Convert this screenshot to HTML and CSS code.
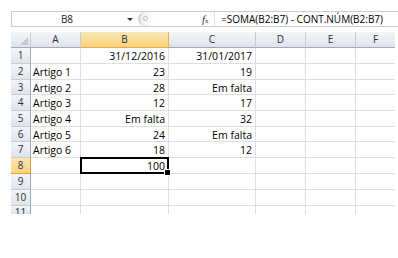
FILE: index.html
```html
<!DOCTYPE html>
<html lang="pt">
<head>
    <meta charset="UTF-8">
    <title>Folha</title>
    <link rel="stylesheet" href="styles.css">
</head>
<body>
<div class="excel">
    <!-- barra de formulas -->
    <div class="formula-bar">
        <div class="name-box">B8</div>
        <div class="name-drop"><span class="arrow"></span></div>
        <div class="splitter"><span class="knob"></span></div>
        <div class="fx"><i>f</i><sub>x</sub></div>
        <div class="formula">=SOMA(B2:B7) - CONT.NÚM(B2:B7)</div>
    </div>

    <!-- grelha -->
    <div class="sheet">
        <div class="hd corner"><span class="tri"></span></div>
        <div class="hd">A</div>
        <div class="hd sel">B</div>
        <div class="hd">C</div>
        <div class="hd">D</div>
        <div class="hd">E</div>
        <div class="hd last">F</div>

        <div class="rh">1</div><div class="c"></div><div class="c num">31/12/2016</div><div class="c num">31/01/2017</div><div class="c"></div><div class="c"></div><div class="c last"></div>
        <div class="rh">2</div><div class="c">Artigo 1</div><div class="c num">23</div><div class="c num">19</div><div class="c"></div><div class="c"></div><div class="c last"></div>
        <div class="rh">3</div><div class="c">Artigo 2</div><div class="c num">28</div><div class="c num">Em falta</div><div class="c"></div><div class="c"></div><div class="c last"></div>
        <div class="rh">4</div><div class="c">Artigo 3</div><div class="c num">12</div><div class="c num">17</div><div class="c"></div><div class="c"></div><div class="c last"></div>
        <div class="rh">5</div><div class="c">Artigo 4</div><div class="c num">Em falta</div><div class="c num">32</div><div class="c"></div><div class="c"></div><div class="c last"></div>
        <div class="rh">6</div><div class="c">Artigo 5</div><div class="c num">24</div><div class="c num">Em falta</div><div class="c"></div><div class="c"></div><div class="c last"></div>
        <div class="rh">7</div><div class="c">Artigo 6</div><div class="c num">18</div><div class="c num">12</div><div class="c"></div><div class="c"></div><div class="c last"></div>
        <div class="rh sel">8</div><div class="c"></div><div class="c num active">100</div><div class="c"></div><div class="c"></div><div class="c"></div><div class="c last"></div>
        <div class="rh">9</div><div class="c"></div><div class="c"></div><div class="c"></div><div class="c"></div><div class="c"></div><div class="c last"></div>
        <div class="rh">10</div><div class="c"></div><div class="c"></div><div class="c"></div><div class="c"></div><div class="c"></div><div class="c last"></div>
        <div class="rh cut">11</div><div class="c cut"></div><div class="c cut"></div><div class="c cut"></div><div class="c cut"></div><div class="c cut"></div><div class="c cut last"></div>
    </div>
</div>
</body>
</html>
```

FILE: styles.css
```css
*{
    margin: 0;
    padding: 0;
    box-sizing: border-box;
}
body{
    background: #fff;
    font-family: "Open Sans", "Liberation Sans", sans-serif;
    font-size: 10.5px;
    color: #000;
}
.excel{
    padding: 11px 0 0 11px;
    width: 395px;
}

/* barra de formulas */
.formula-bar{
    display: flex;
    height: 16px;
    border-top: 1px solid #c6ccd4;
    border-bottom: 1px solid #c6ccd4;
    margin-right: -3px;
}
.name-box{
    width: 111px;
    border-left: 1px solid #c6ccd4;
    text-align: center;
    line-height: 14px;
    font-size: 10px;
    color: #222;
}
.name-drop{
    width: 14px;
    position: relative;
}
.name-drop .arrow{
    position: absolute;
    left: 5px;
    top: 6px;
    border-left: 3px solid transparent;
    border-right: 3px solid transparent;
    border-top: 3px solid #333;
}
.splitter{
    width: 66px;
    position: relative;
}
.splitter::before{
    content: "";
    position: absolute;
    left: 2px;
    top: 0;
    width: 14px;
    height: 14px;
    border-radius: 7px 0 0 7px;
    border-left: 2px solid #cdd2d8;
    background: linear-gradient(to right, #eceef1, #fff);
}
.splitter .knob{
    position: absolute;
    left: 7px;
    top: 4px;
    width: 5px;
    height: 5px;
    border-radius: 50%;
    border: 1px solid #b3b9c1;
}
.fx{
    width: 12px;
    font-family: "Liberation Serif", serif;
    font-size: 11px;
    line-height: 14px;
    color: #333;
}
.fx sub{
    font-size: 7px;
    vertical-align: baseline;
}
.formula{
    flex: 1;
    border-left: 1px solid #dfe2e6;
    padding-left: 6px;
    line-height: 14px;
    font-size: 10px;
    white-space: nowrap;
}

/* grelha */
.sheet{
    display: grid;
    grid-template-columns: 20px 50px 88px 87px 50px 50px 39px;
    grid-template-rows: 16px 16px 16px 15px 16px 16px 15px 16px 16px 16px 16px 8px;
    margin-top: 5px;
}
.hd, .rh{
    background: linear-gradient(#f3f5f8, #dfe4ea);
    border-right: 1px solid #c5ccd5;
    border-bottom: 1px solid #9eaab8;
    color: #27313c;
    text-align: center;
    line-height: 15px;
    font-size: 10px;
}
.rh{
    border-bottom: 1px solid #c5ccd5;
    border-right: 1px solid #9eaab8;
}
.hd.sel, .rh.sel{
    background: linear-gradient(#fbe6b4, #f8d37c);
    border-bottom-color: #f2a23c;
    border-right-color: #e4b156;
}
.rh.sel{
    border-right-color: #e29a36;
}
.corner{
    position: relative;
}
.corner .tri{
    position: absolute;
    right: 2px;
    bottom: 2px;
    border-left: 8px solid transparent;
    border-bottom: 8px solid #c3c9d1;
}
.hd.last, .c.last{
    border-right: none;
}
.c{
    border-right: 1px solid #dcdfe2;
    border-bottom: 1px solid #dcdfe2;
    padding: 0 2px;
    line-height: 16px;
    white-space: nowrap;
    overflow: hidden;
}
.num{
    text-align: right;
    padding-right: 3px;
}
.cut{
    border-bottom: none;
    overflow: hidden;
}
.rh.cut{
    line-height: 13px;
}
.active{
    position: relative;
    overflow: visible;
}
.active::before{
    content: "";
    position: absolute;
    left: -1px;
    top: -1px;
    right: -1px;
    bottom: -1px;
    border: 2px solid #000;
}
.active::after{
    content: "";
    position: absolute;
    right: -3px;
    bottom: -3px;
    width: 5px;
    height: 5px;
    background: #000;
    border: 1px solid #fff;
}
```
